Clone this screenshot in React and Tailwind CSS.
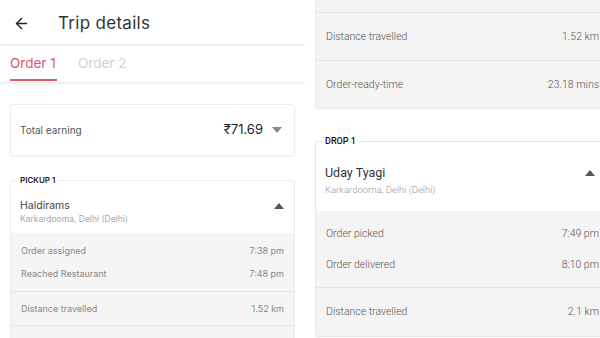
import React from 'react';
import { ArrowLeft } from 'lucide-react';

const Tri = ({ up, className = '' }) => (
  <svg width="10" height="6" viewBox="0 0 10 6" className={className}>
    <path d={up ? 'M0 6 L5 0 L10 6 Z' : 'M0 0 L10 0 L5 6 Z'} fill="currentColor" />
  </svg>
);

const LeftRow = ({ label, value }) => (
  <div className="flex items-center justify-between px-[10px] h-[23px]">
    <span>{label}</span>
    <span>{value}</span>
  </div>
);

const RightRow = ({ label, value, h = 'h-[47px]' }) => (
  <div className={`flex items-center justify-between pl-[10px] pr-[10px] ${h}`}>
    <span>{label}</span>
    <span>{value}</span>
  </div>
);

const LeftPanel = () => (
  <div className="w-[305px] h-[338px] shrink-0 overflow-hidden bg-white font-['Inter',sans-serif]">
    {/* header */}
    <div className="relative z-20 h-[44px] flex items-center pt-[3px] bg-white shadow-[0_1px_3px_rgba(0,0,0,0.13)]">
      <ArrowLeft size={17} strokeWidth={2} className="ml-[13px] text-[#222]" />
      <span className="ml-[28px] text-[17px] text-[#333] tracking-[0.3px]">Trip details</span>
    </div>

    {/* tabs */}
    <div className="relative z-10 h-[38px] flex items-end bg-white shadow-[0_1px_3px_rgba(0,0,0,0.12)]">
      <div className="ml-[10px] flex flex-col items-start">
        <span className="text-[13.5px] text-[#e0566a] leading-none mb-[9px]">Order 1</span>
        <div className="h-[2px] w-[47px] bg-[#e0566a] mb-[1px]" />
      </div>
      <span className="ml-[21px] mb-[12px] text-[13.5px] text-[#d2d2d2] leading-none">Order 2</span>
    </div>

    {/* total earning */}
    <div className="mx-[10px] mt-[22px] h-[52px] rounded-[3px] border border-[#ececec] shadow-[0_1px_2px_rgba(0,0,0,0.05)] flex items-center justify-between px-[9px]">
      <span className="text-[10px] text-[#555]">Total earning</span>
      <div className="flex items-center gap-[9px] pr-[3px]">
        <span className="text-[13px] text-[#222]">₹71.69</span>
        <Tri className="text-[#888]" />
      </div>
    </div>

    {/* pickup */}
    <fieldset className="mx-[10px] mt-[19px] rounded-[3px] border border-[#ececec] overflow-hidden">
      <legend className="ml-[6px] px-[3px] text-[8px] font-semibold text-[#222] leading-[10px]">PICKUP 1</legend>
      <div className="bg-white px-[9px] pt-[14px] pb-[7px] flex items-start justify-between">
        <div className="flex flex-col">
          <span className="text-[10.5px] text-[#444] leading-[14px]">Haldirams</span>
          <span className="text-[8.5px] text-[#a8a8a8] leading-[13px]">Karkardooma, Delhi (Delhi)</span>
        </div>
        <Tri up className="text-[#555] mt-[4px] mr-[1px]" />
      </div>
      <div className="bg-[#f5f5f5] text-[9px] text-[#888]">
        <div className="pt-[6px] pb-[6px]">
          <LeftRow label="Order assigned" value="7:38 pm" />
          <LeftRow label="Reached Restaurant" value="7:48 pm" />
        </div>
        <div className="border-t border-[#e6e6e6]">
          <div className="flex items-center justify-between px-[10px] h-[33px]">
            <span>Distance travelled</span>
            <span>1.52 km</span>
          </div>
        </div>
        <div className="border-t border-[#e6e6e6] h-[30px]" />
      </div>
    </fieldset>
  </div>
);

const RightPanel = () => (
  <div className="w-[295px] h-[338px] overflow-hidden bg-white font-['Roboto',sans-serif] font-light">
    <div className="w-[305px] pl-[10px]">
      {/* top card (continued) */}
      <div className="-mt-[20px] rounded-b-[3px] border border-t-0 border-[#ebebeb] bg-[#f4f4f4] text-[10.5px] text-[#555]">
        <div className="h-[32px]" />
        <div className="border-t border-[#e4e4e4]">
          <RightRow label="Distance travelled" value="1.52 km" />
        </div>
        <div className="border-t border-[#e4e4e4]">
          <RightRow label="Order-ready-time" value="23.18 mins" />
        </div>
      </div>

      {/* drop */}
      <fieldset className="mt-[26px] rounded-[3px] border border-[#e8e8e8] overflow-hidden">
        <legend className="ml-[6px] px-[3px] text-[9px] font-medium text-[#111] leading-[12px]">DROP 1</legend>
        <div className="bg-white px-[9px] pt-[18px] pb-[13px] flex items-start justify-between">
          <div className="flex flex-col">
            <span className="text-[12.5px] text-[#333] font-normal leading-[16px]">Uday Tyagi</span>
            <span className="text-[9.5px] text-[#999] leading-[17px]">Karkardooma, Delhi (Delhi)</span>
          </div>
          <Tri up className="text-[#555] mt-[5px] mr-[5px]" />
        </div>
        <div className="bg-[#f4f4f4] text-[10.5px] text-[#555]">
          <div className="pt-[8px] pb-[7px]">
            <RightRow label="Order picked" value="7:49 pm" h="h-[30px]" />
            <RightRow label="Order delivered" value="8:10 pm" h="h-[31px]" />
          </div>
          <div className="border-t border-[#e4e4e4]">
            <RightRow label="Distance travelled" value="2.1 km" h="h-[48px]" />
          </div>
        </div>
      </fieldset>
    </div>
  </div>
);

export default function App() {
  return (
    <div className="w-[600px] h-[338px] flex overflow-hidden bg-white">
      <LeftPanel />
      <RightPanel />
    </div>
  );
}
